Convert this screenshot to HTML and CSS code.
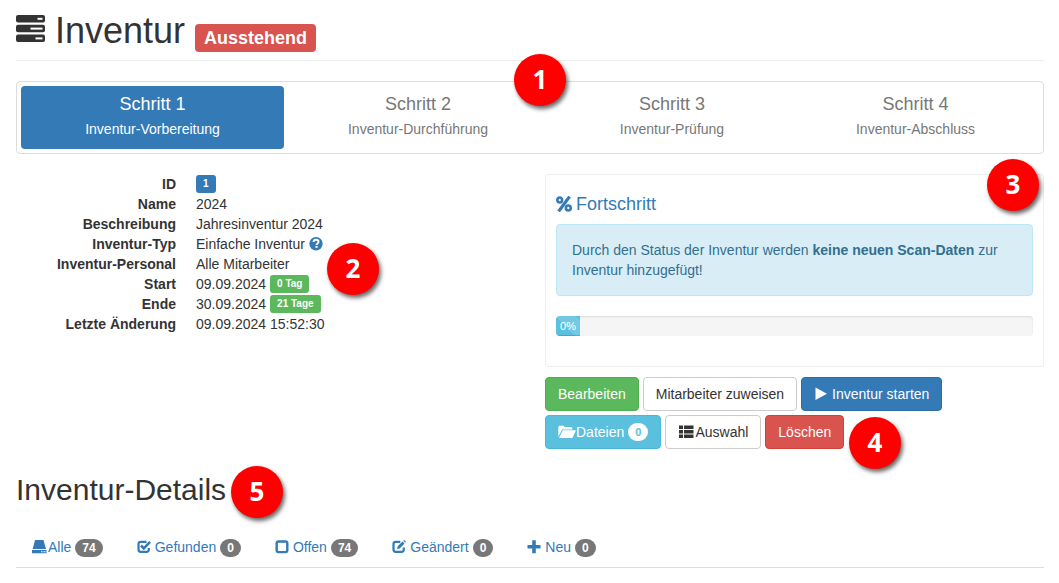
FILE: index.html
```html
<!DOCTYPE html>
<html lang="de">
<head>
<meta charset="utf-8">
<meta name="viewport" content="width=device-width, initial-scale=1">
<title>Inventur</title>
<link rel="stylesheet" href="styles.css">
</head>
<body>
<main class="page">
  <header class="page-header">
    <svg class="header-icon" viewBox="0 0 29 27" aria-hidden="true">
      <g fill="#333"><rect width="29" height="7.4" rx="2"/><rect y="9.8" width="29" height="7.4" rx="2"/><rect y="19.6" width="29" height="7.4" rx="2"/></g>
      <g fill="#fff"><rect x="21.5" y="2.8" width="5" height="2"/><rect x="14.5" y="12.6" width="12" height="2"/><rect x="19.5" y="22.4" width="7" height="2"/></g>
    </svg>
    <h1 class="page-title">Inventur</h1>
    <span class="label label-status">Ausstehend</span>
  </header>

  <nav class="steps" aria-label="Schritte">
    <a class="step step-active" href="#"><span class="step-title">Schritt 1</span><span class="step-text">Inventur-Vorbereitung</span></a>
    <a class="step" href="#"><span class="step-title">Schritt 2</span><span class="step-text">Inventur-Durchführung</span></a>
    <a class="step" href="#"><span class="step-title">Schritt 3</span><span class="step-text">Inventur-Prüfung</span></a>
    <a class="step" href="#"><span class="step-title">Schritt 4</span><span class="step-text">Inventur-Abschluss</span></a>
    <span class="marker marker-steps">1</span>
  </nav>

  <div class="columns">
    <section class="info">
      <dl class="facts">
        <dt>ID</dt><dd><span class="label label-primary">1</span></dd>
        <dt>Name</dt><dd>2024</dd>
        <dt>Beschreibung</dt><dd>Jahresinventur 2024</dd>
        <dt>Inventur-Typ</dt><dd>Einfache Inventur
          <svg class="icon icon-help" viewBox="0 0 14 14" aria-hidden="true"><circle cx="7" cy="6.7" r="6.7" fill="currentColor"/><path d="M4.6 5.1C4.6 3.5 5.6 2.8 7 2.8s2.5.8 2.5 2c0 1.7-1.9 1.7-1.9 3.2" fill="none" stroke="#fff" stroke-width="2"/><path d="M6.5 8.9h2.1v2H6.500z" fill="#fff"/></svg></dd>
        <dt>Inventur-Personal</dt><dd>Alle Mitarbeiter</dd>
        <dt>Start</dt><dd>09.09.2024 <span class="label label-success">0 Tag</span></dd>
        <dt>Ende</dt><dd>30.09.2024 <span class="label label-success">21 Tage</span></dd>
        <dt>Letzte Änderung</dt><dd>09.09.2024 15:52:30</dd>
      </dl>
      <span class="marker marker-info">2</span>
    </section>

    <section class="side">
      <div class="panel">
        <h4 class="panel-title">
          <svg class="icon-percent" viewBox="0 0 16 16" aria-hidden="true"><g fill="none" stroke="currentColor"><ellipse cx="3.700" cy="4" rx="2.4" ry="2.500" stroke-width="2.600"/><ellipse cx="12.300" cy="12" rx="2.400" ry="2.500" stroke-width="2.600"/><path d="M13.600 .6 2.600 15.400" stroke-width="3.200"/></g></svg>
          Fortschritt</h4>
        <div class="alert">Durch den Status der Inventur werden <strong>keine neuen Scan-Daten</strong> zur Inventur hinzugefügt!</div>
        <div class="progress"><div class="progress-bar" role="progressbar" aria-valuenow="0" aria-valuemin="0" aria-valuemax="100">0%</div></div>
        <span class="marker marker-panel">3</span>
      </div>
      <div class="actions">
        <button class="btn btn-success" type="button">Bearbeiten</button>
        <button class="btn btn-default" type="button">Mitarbeiter zuweisen</button>
        <button class="btn btn-primary" type="button"><svg class="icon icon-spaced" viewBox="0 0 14 14" aria-hidden="true"><path d="M1.500 .5 13 6.700 1.500 13z" fill="currentColor"/></svg>Inventur starten</button>
        <button class="btn btn-info" type="button"><svg class="icon-folder" viewBox="0 0 18 14" aria-hidden="true"><path d="M.3 11.800V2L1.300.7h4.200l1.300 1.300h6.400l1 1.100v1.400H4.100zM4.800 5.300H18L14.400 13H1z" fill="currentColor"/></svg>Dateien<span class="badge badge-light">0</span></button>
        <button class="btn btn-default" type="button"><svg class="icon-list" viewBox="0 0 17 14" aria-hidden="true"><path d="M1 .5h4v3.500H1zM6 .5h9.500v3.500H6zM1 5h4v3.500H1zM6 5h9.500v3.500H6zM1 9.500h4V13H1zM6 9.500h9.500V13H6z" fill="currentColor"/></svg>Auswahl</button>
        <button class="btn btn-danger" type="button">Löschen</button>
        <span class="marker marker-actions">4</span>
      </div>
    </section>
  </div>

  <section class="details">
    <h2 class="details-title">Inventur-Details<span class="marker marker-details">5</span></h2>
    <nav class="tabs" aria-label="Inventur-Details">
      <a class="tab" href="#"><svg class="icon-drive" viewBox="0 0 16 14" aria-hidden="true"><path d="M3 0h8.500l2.500 9H.7zM0 10h14.500v3.300H0z" fill="currentColor"/><path d="M9 11.200h1.500v1H9zM11.500 11.200h2v1h-2z" fill="#fff"/></svg>Alle<span class="badge">74</span></a>
      <a class="tab" href="#"><svg class="icon icon-spaced" viewBox="0 0 14 14" aria-hidden="true"><path d="M9.500 1.800H3.800Q1.500 1.800 1.500 4.100v5.500q0 2.300 2.300 2.300h5.700q2.300 0 2.300-2.300V8" fill="none" stroke="currentColor" stroke-width="2.200"/><path d="m4 5.500 2.800 2.800 6.300-6.400" fill="none" stroke="currentColor" stroke-width="2.600"/></svg>Gefunden<span class="badge">0</span></a>
      <a class="tab" href="#"><svg class="icon icon-spaced" viewBox="0 0 14 14" aria-hidden="true"><rect x="1.700" y="1.500" width="10.600" height="10.600" rx="1.800" fill="none" stroke="currentColor" stroke-width="2.400"/></svg>Offen<span class="badge">74</span></a>
      <a class="tab" href="#"><svg class="icon icon-spaced" viewBox="0 0 14 14" aria-hidden="true"><path d="M8.300 1.800H3.800Q1.500 1.800 1.500 4.100v5.500q0 2.300 2.300 2.300h5.700q2.300 0 2.300-2.300V7.500" fill="none" stroke="currentColor" stroke-width="2.200"/><path d="m5 9.100.7-2.800 4.800-4.800 2 2-4.800 4.900zM11.200.8l.9-.8L13.900 1.800l-.8.9z" fill="currentColor"/></svg>Geändert<span class="badge">0</span></a>
      <a class="tab" href="#"><svg class="icon icon-spaced" viewBox="0 0 14 14" aria-hidden="true"><path d="M5.200.3h3.600v4.600h4.700v3.600H8.800v4.700H5.200V8.500H.5V4.900h4.700z" fill="currentColor"/></svg>Neu<span class="badge">0</span></a>
    </nav>
  </section>
</main>
</body>
</html>
```

FILE: styles.css
```css
* { box-sizing: border-box; }

body {
  margin: 0;
  background: #fff;
  color: #333;
  font-family: "Liberation Sans", Arial, sans-serif;
  font-size: 14px;
  line-height: 20px;
}

a { color: #337ab7; text-decoration: none; }
svg { flex: none; }

.page { padding: 10px 15px 15px 16px; }

/* Header */
.page-header {
  display: flex;
  align-items: center;
  height: 51px;
  padding-bottom: 9px;
  border-bottom: 1px solid #eee;
  margin-bottom: 20px;
}
.header-icon { width: 29px; height: 27px; margin: 0 10px 4px 0; }
.page-title { margin: 0 10px 0 0; font-size: 36px; line-height: 40px; font-weight: 400; }

.label {
  display: inline-block;
  padding: 3px 7px;
  border-radius: 3px;
  color: #fff;
  font-size: 10px;
  line-height: 12px;
  font-weight: 700;
}
.label-status {
  margin-top: 15px;
  padding: 4px 9px;
  border-radius: 4px;
  background: #d9534f;
  font-size: 18px;
  line-height: 20px;
}
.label-primary { background: #337ab7; }
.label-success { background: #5cb85c; }

/* Steps */
.steps {
  position: relative;
  display: grid;
  grid-template-columns: 263fr 268fr 240fr 247fr;
  padding: 4px;
  border: 1px solid #ddd;
  border-radius: 4px;
  margin-bottom: 20px;
}
.step {
  display: flex;
  flex-direction: column;
  align-items: center;
  gap: 5px;
  padding: 8px 15px 10px;
  border-radius: 4px;
  color: #777;
}
.step-active { background: #337ab7; color: #fff; }
.step-title { font-size: 18px; }

/* Columns */
.columns { display: grid; grid-template-columns: 1fr 1fr; gap: 30px; }
.info { position: relative; }
.facts {
  display: grid;
  grid-template-columns: 160px 1fr;
  column-gap: 20px;
  grid-auto-rows: 20px;
  margin: 0;
}
.facts dt { font-weight: 700; text-align: right; }
.facts dd { display: flex; align-items: center; gap: 4px; margin: 0; }

.icon { width: 14px; height: 14px; }
.icon-help { color: #337ab7; }
.icon-spaced { margin-right: 4px; }
.icon-percent { width: 16px; height: 16px; }
.icon-folder { width: 18px; height: 14px; }
.icon-list { width: 17px; height: 14px; }
.icon-drive { width: 16px; height: 14px; }

.panel {
  position: relative;
  padding: 19px 10px 30px;
  border: 1px solid #eee;
  border-radius: 3px;
  margin-bottom: 10px;
}
.panel-title {
  display: flex;
  align-items: center;
  gap: 4px;
  margin: 0 0 10px;
  color: #337ab7;
  font-size: 18px;
  line-height: 20px;
  font-weight: 400;
}
.alert {
  padding: 15px;
  border: 1px solid #bce8f1;
  border-radius: 4px;
  margin-bottom: 20px;
  background: #d9edf7;
  color: #31708f;
}
.progress {
  height: 20px;
  overflow: hidden;
  border-radius: 4px;
  background: #f5f5f5;
  box-shadow: inset 0 1px 2px rgba(0, 0, 0, .1);
}
.progress-bar {
  width: 24px;
  height: 20px;
  background: #5bc0de linear-gradient(45deg, rgba(255, 255, 255, .15) 25%, transparent 25%, transparent 50%, rgba(255, 255, 255, .15) 50%, rgba(255, 255, 255, .15) 75%, transparent 75%, transparent) 0 0 / 40px 40px;
  box-shadow: inset 0 -1px 0 rgba(0, 0, 0, .15);
  color: #fff;
  font-size: 11px;
  text-align: center;
}

/* Buttons */
.actions { position: relative; display: flex; flex-wrap: wrap; gap: 4px; }
.btn {
  display: flex;
  align-items: center;
  padding: 6px 12px;
  border: 1px solid;
  border-radius: 4px;
  color: #fff;
  font: inherit;
  white-space: nowrap;
  cursor: pointer;
}
.btn-default { border-color: #ccc; background: #fff; color: #333; }
.btn-success { border-color: #4cae4c; background: #5cb85c; }
.btn-primary { border-color: #2e6da4; background: #337ab7; }
.btn-info { border-color: #46b8da; background: #5bc0de; }
.btn-danger { border-color: #d43f3a; background: #d9534f; }

.badge {
  padding: 3px 7px;
  border-radius: 10px;
  margin: 1px 0 0 4px;
  background: #777;
  color: #fff;
  font-size: 12px;
  line-height: 12px;
  font-weight: 700;
}
.badge-light { margin-top: 0; background: #fff; color: #5bc0de; font-size: 11px; }

/* Details */
.details-title {
  position: relative;
  width: fit-content;
  margin: 24px 0 20px;
  font-size: 30px;
  line-height: 33px;
  font-weight: 400;
}
.tabs { display: flex; gap: 2px; border-bottom: 1px solid #ddd; }
.tab { display: flex; align-items: center; padding: 11px 16px 10px; white-space: nowrap; }

/* Numbered markers lying over the page */
.marker {
  position: absolute;
  width: 52px;
  height: 52px;
  border-radius: 50%;
  background: #f00;
  box-shadow: 2px 3px 4px rgba(0, 0, 0, .6);
  color: #fff;
  font: 700 26px/50px "Open Sans", sans-serif;
  text-align: center;
}
.marker-steps { top: -28px; left: 497px; }
.marker-info { top: 69px; left: 311px; }
.marker-panel { top: -16px; right: 4px; }
.marker-actions { top: 40px; left: 304px; }
.marker-details { top: -7px; left: 215px; }
```
